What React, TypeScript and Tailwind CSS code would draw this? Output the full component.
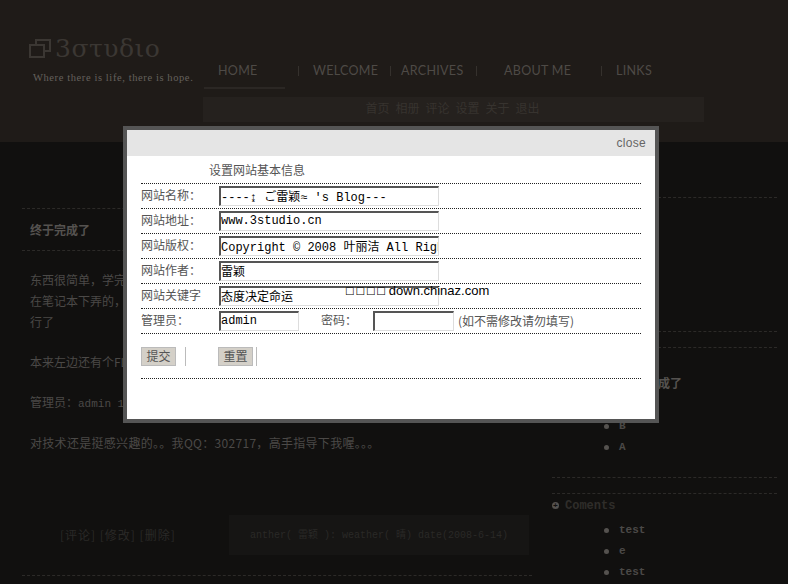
import React from 'react';

const mono = "font-['Liberation_Mono','Noto_Sans_CJK_SC',monospace]";

const navItems = [
  { label: 'HOME', width: 'w-[80px]', gap: 'w-[14px]', sep: true },
  { label: 'WELCOME', width: 'w-[77px]', gap: 'w-[10px]', sep: true },
  { label: 'ARCHIVES', width: 'w-[75px]', gap: 'w-[27px]', sep: true },
  { label: 'ABOUT ME', width: 'w-[97px]', gap: 'w-[14px]', sep: true },
  { label: 'LINKS', width: 'w-[50px]', gap: 'w-0', sep: false }
];

const Dashed = ({ className = '' }: { className?: string }) => (
  <div className={`border-t border-dashed border-[#2c2a28] ${className}`} />
);

const Dotted = () => <div className="border-t border-dotted border-[#222]" />;

// Sunken input like the old browser default
const Field = ({ value, width = 'w-[220px]' }: { value: string; width?: string }) => (
  <input
    readOnly
    defaultValue={value}
    className={`${width} h-[20px] border-t-2 border-l-2 border-r border-b border-t-[#555] border-l-[#555] border-r-[#ddd] border-b-[#ddd] bg-white pt-0 pr-0 pb-[1px] pl-0 text-[12px] leading-none text-black outline-none ${mono}`}
  />
);

const Label = ({ children, className = 'w-[78px]' }: { children: React.ReactNode; className?: string }) => (
  <span className={`pb-[3px] text-[12px] text-[#555] ${className}`}>{children}</span>
);

const Row = ({ label, value }: { label: string; value: string }) => (
  <>
    <div className="flex h-[24px] items-center">
      <Label>{label}</Label>
      <Field value={value} />
    </div>
    <Dotted />
  </>
);

const Modal = () => (
  <div className="absolute top-[126px] left-[123px] h-[297px] w-[536px] border-4 border-[#555] bg-white font-['Noto_Sans_CJK_SC',sans-serif]">
    <div className="flex h-[26px] items-center justify-end bg-[#e5e5e5] pr-[9px]">
      <span className="font-['Liberation_Sans',sans-serif] text-[12px] tracking-[0.3px] text-[#666]">close</span>
    </div>
    <div className="px-[14px]">
      <div className="flex h-[27px] items-center pl-[68px] text-[12px] text-[#555]">设置网站基本信息</div>
      <Dotted />
      <Row label="网站名称：" value="----↨ ご雷颖≈ 's Blog---" />
      <Row label="网站地址：" value="www.3studio.cn" />
      <Row label="网站版权：" value="Copyright © 2008 叶丽洁 All Rights Reserved" />
      <Row label="网站作者：" value="雷颖" />
      <Row label="网站关键字" value="态度决定命运" />
      <div className="flex h-[24px] items-center">
        <Label>管理员：</Label>
        <Field value="admin" width="w-[80px]" />
        <Label className="ml-[22px] w-[52px]">密码：</Label>
        <Field value="" width="w-[81px]" />
        <span className="ml-[4px] text-[12px] text-[#555]">(如不需修改请勿填写)</span>
      </div>
      <Dotted />
      <div className="flex h-[44px] items-center">
        <button className="h-[19px] w-[35px] border border-[#bbb] bg-[#d4d0c8] text-[12px] leading-none text-[#555]">提交</button>
        <span className="ml-[9px] h-[19px] border-l border-[#bbb]" />
        <button className="ml-[32px] h-[19px] w-[35px] border border-[#bbb] bg-[#d4d0c8] text-[12px] leading-none text-[#555]">重置</button>
        <span className="ml-[3px] h-[19px] border-l border-[#bbb]" />
      </div>
      <Dotted />
    </div>
    {/* download-site stamp that sits on top of the form */}
    <div className="absolute top-[154px] left-[218px] flex items-center whitespace-nowrap font-['Liberation_Sans',sans-serif] text-[13px] leading-none text-black">
      <span className="font-['DejaVu_Sans',sans-serif] text-[10px] tracking-[1px]">□□□□</span>
      <span className="ml-[2px]">down.chinaz.com</span>
    </div>
  </div>
);

const Header = () => (
  <header className="flex h-[142px] bg-[#1f1b18]">
    <div className="w-[203px] shrink-0 pl-[29px] pt-[35px]">
      <div className="flex h-[26px] items-center">
        <svg width="22" height="22" viewBox="0 0 22 22" fill="none" stroke="#3b3733" strokeWidth="2">
          <path d="M7 7V3h14v11h-6" />
          <rect x="1" y="8" width="14" height="12" />
        </svg>
        <span className="ml-[4px] font-['DejaVu_Serif',serif] text-[25px] leading-none tracking-[0.5px] text-[#3b3733]">3στυδιο</span>
      </div>
      <p className="mt-[9px] ml-[4px] whitespace-nowrap font-['Liberation_Serif',serif] text-[10.5px] tracking-[0.6px] text-[#65615d]">
        Where there is life, there is hope.
      </p>
    </div>
    <div className="w-[501px] shrink-0 pt-[62px]">
      <nav className="flex h-[25px] pl-[15px] font-['Lato',sans-serif] text-[12.5px] tracking-[0.3px] text-[#4e4a46]">
        {navItems.map((item) => (
          <div key={item.label} className="flex h-[18px] items-center">
            <span className={`whitespace-nowrap ${item.width}`}>{item.label}</span>
            {item.sep && <span className="h-[10px] border-l border-[#35312d]" />}
            <span className={item.gap} />
          </div>
        ))}
      </nav>
      <div className="ml-px h-[2px] w-[81px] bg-[#2b2724]" />
      <div className="mt-[8px] flex h-[25px] w-[501px] items-center justify-center gap-[6px] bg-[#25211e] pr-[2px] pb-[3px] font-['Noto_Sans_CJK_SC',sans-serif] text-[12px] text-[#37332f]">
        <span>首页</span>
        <span>相册</span>
        <span>评论</span>
        <span>设置</span>
        <span>关于</span>
        <span>退出</span>
      </div>
    </div>
  </header>
);

const Post = () => (
  <main className="ml-[22px] w-[510px] shrink-0 pt-[66px] font-['Noto_Sans_CJK_SC',sans-serif] text-[12px] text-[#4b4947]">
    <Dashed />
    <h2 className="flex h-[41px] items-center pl-[8px] text-[12px] font-bold text-[#55524f]">终于完成了</h2>
    <Dashed />
    <div className="pt-[19px] pl-[8px] leading-[20px]">
      <p>东西很简单，学完了就做了这个，一直在笔记本上弄的</p>
      <p className="mt-px">在笔记本下弄的，所以有些地方不太好，以后再改就</p>
      <p className="mt-px">行了</p>
      <p className="mt-[20px]">本来左边还有个FLASH的，后来去掉了</p>
      <p className="mt-[20px]">
        管理员：<span className={`${mono} text-[11px]`}>admin 123</span>
      </p>
      <p className="mt-[19px] tracking-[0.3px]">对技术还是挺感兴趣的。。我QQ：302717，高手指导下我喔。。。</p>
    </div>
    <div className="mt-[62px] flex h-[40px] items-center text-[#2a2927]">
      <span className="ml-[38px] w-[169px] whitespace-nowrap tracking-[1px]">[评论] [修改] [删除]</span>
      <div className={`flex h-[40px] w-[300px] items-center justify-center whitespace-nowrap bg-[#161514] text-[10px] ${mono}`}>
        anther( 雷颖 ): weather( 晴) date(2008-6-14)
      </div>
    </div>
    <Dashed className="mt-[20px]" />
  </main>
);

const Bullet = ({ children }: { children: React.ReactNode }) => (
  <li className="flex h-[16px] items-center gap-[10px] font-bold">
    <span className="size-[5px] rounded-full bg-[#55524f]" />
    {children}
  </li>
);

const Sidebar = () => (
  <aside className={`ml-[20px] w-[225px] shrink-0 pt-[55px] text-[11px] text-[#4b4947] ${mono}`}>
    <Dashed />
    <Dashed className="mt-[133px]" />
    <Dashed className="mt-[15px]" />
    <h3 className="mt-[27px] h-[16px] pl-[70px] font-['Noto_Sans_CJK_SC',sans-serif] text-[12px] leading-[16px] font-bold whitespace-nowrap text-[#55524f]">
      终于完成了
    </h3>
    <ul className="mt-[27px] space-y-[5px] pl-[52px]">
      <Bullet>B</Bullet>
      <Bullet>A</Bullet>
    </ul>
    <Dashed className="mt-[22px]" />
    <Dashed className="mt-[15px]" />
    <div className="mt-[4px] flex h-[15px] items-center gap-[6px] text-[12px] font-bold text-[#2f2d2a]">
      <span className="flex size-[7px] items-center justify-center rounded-full bg-[#55524f] text-[8px] leading-none text-[#11100f]">+</span>
      Coments
    </div>
    <ul className="mt-[9px] space-y-[5px] pl-[52px]">
      <Bullet>test</Bullet>
      <Bullet>e</Bullet>
      <Bullet>test</Bullet>
    </ul>
  </aside>
);

export default function App() {
  return (
    <div className="relative h-[584px] w-[788px] overflow-hidden bg-[#11100f]">
      <Header />
      <div className="flex">
        <Post />
        <Sidebar />
      </div>
      <Modal />
    </div>
  );
}
